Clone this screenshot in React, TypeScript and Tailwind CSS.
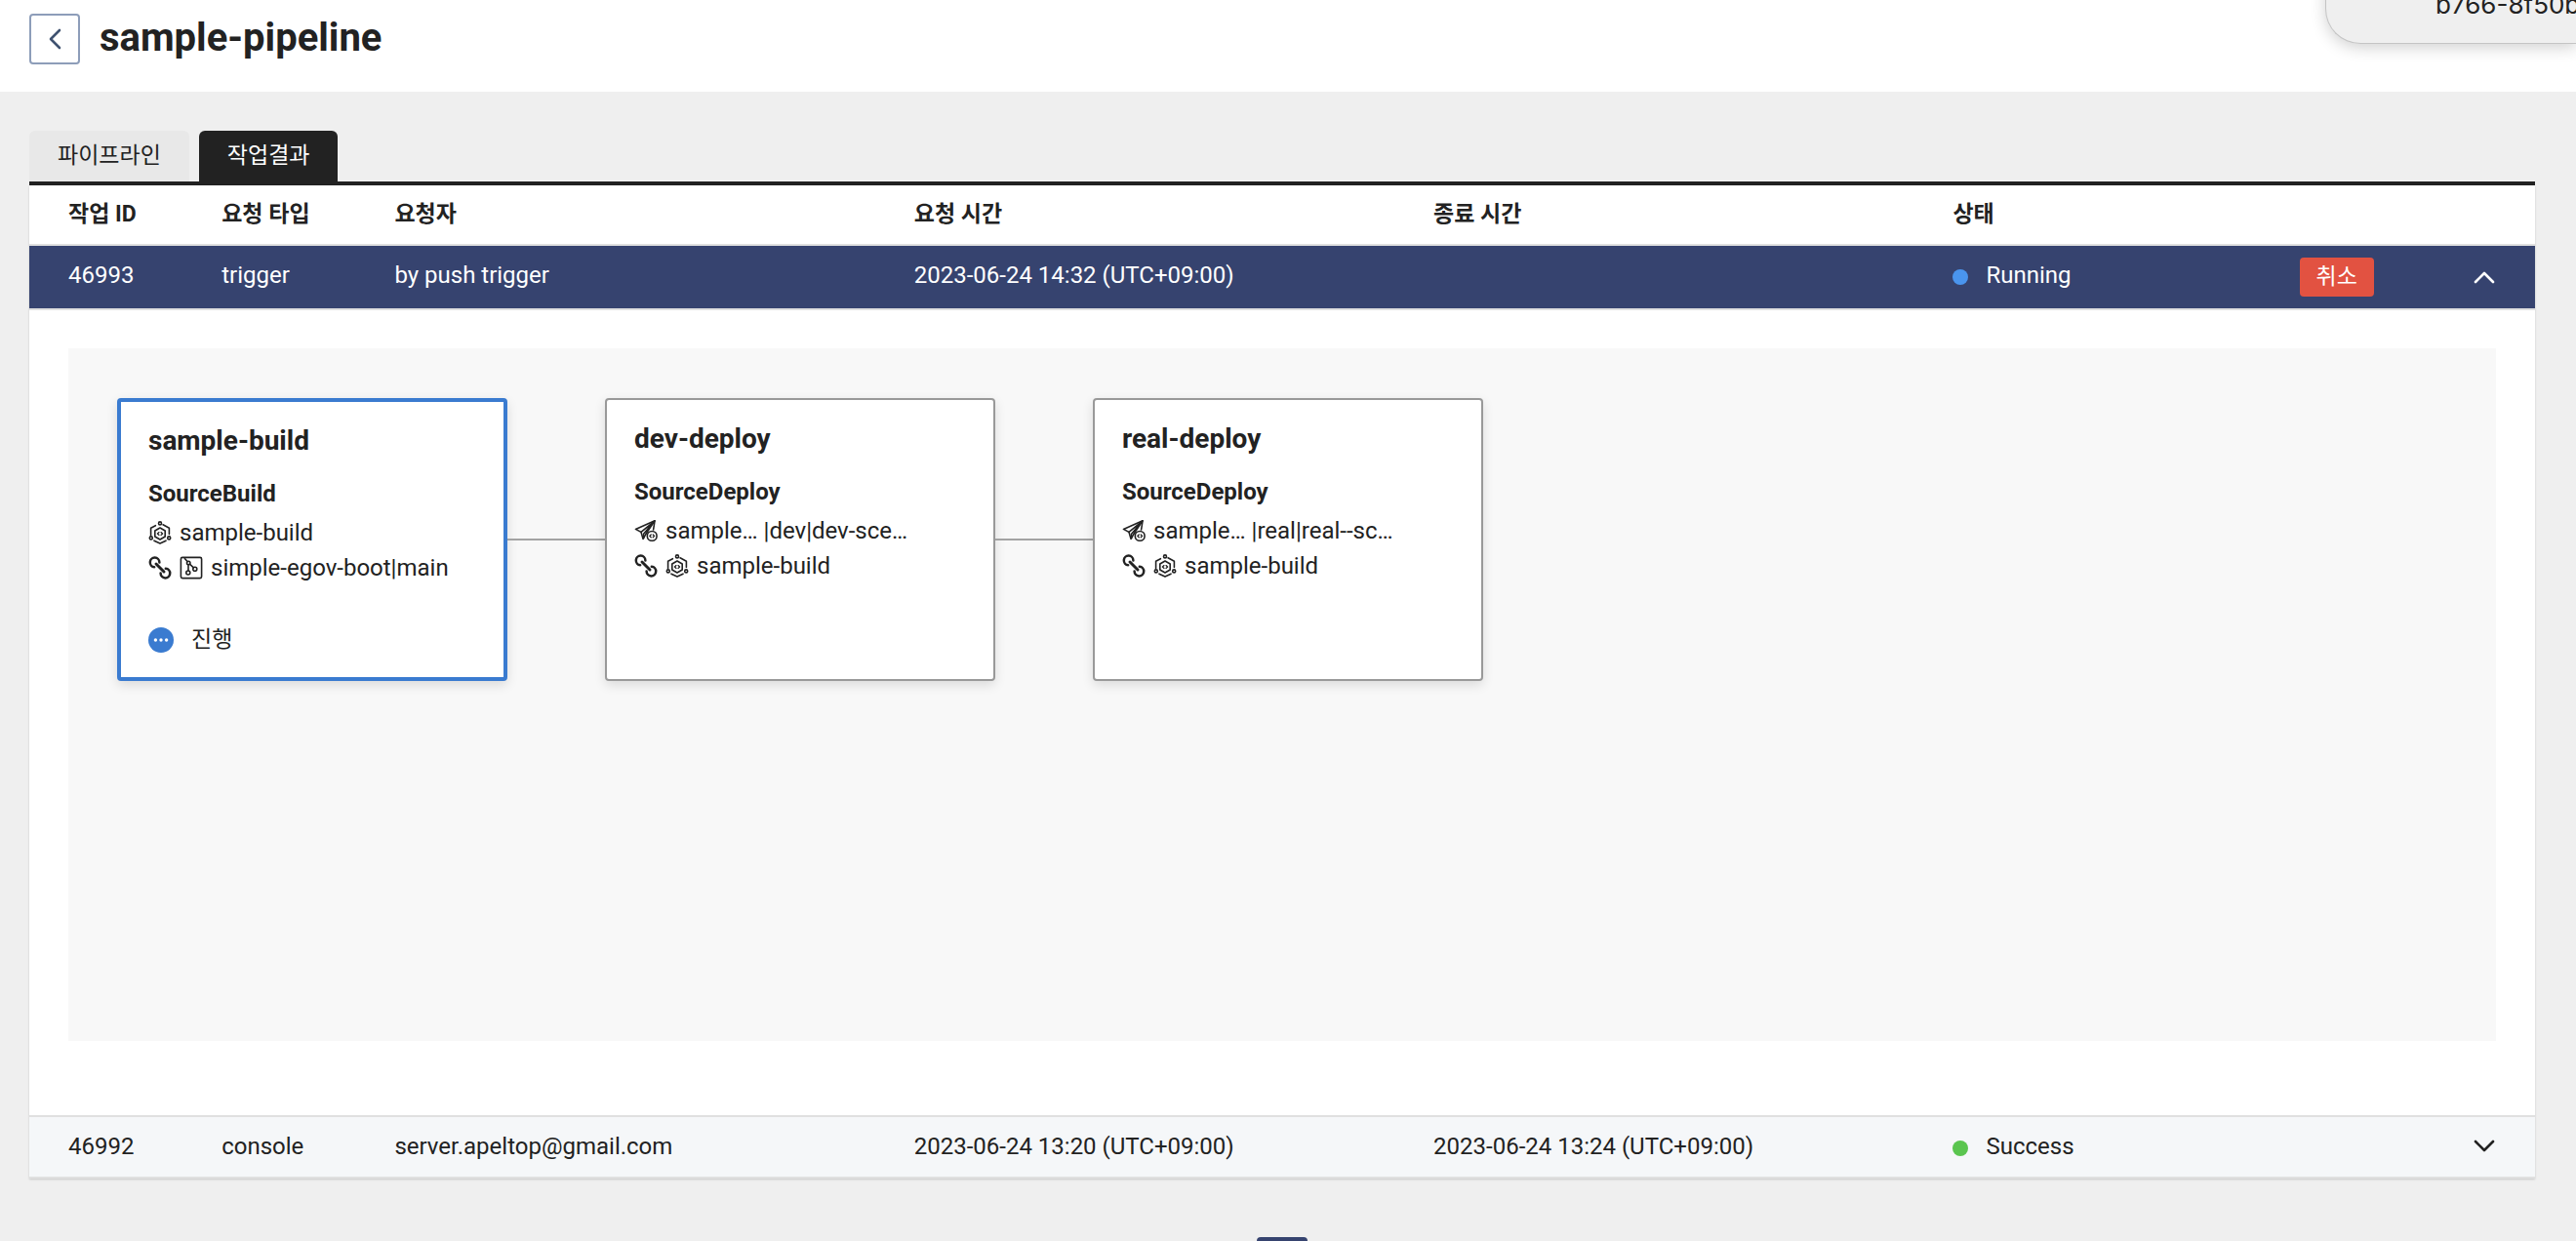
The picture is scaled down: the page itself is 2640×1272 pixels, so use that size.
import { Fragment, useState, type ReactNode } from "react";

type Job = {
  id: string;
  type: string;
  requester: string;
  requestedAt: string;
  finishedAt: string;
  status: "Running" | "Success";
};

const jobs: Job[] = [
  {
    id: "46993",
    type: "trigger",
    requester: "by push trigger",
    requestedAt: "2023-06-24 14:32 (UTC+09:00)",
    finishedAt: "",
    status: "Running",
  },
  {
    id: "46992",
    type: "console",
    requester: "server.apeltop@gmail.com",
    requestedAt: "2023-06-24 13:20 (UTC+09:00)",
    finishedAt: "2023-06-24 13:24 (UTC+09:00)",
    status: "Success",
  },
];

function Icon({ children }: { children: ReactNode }) {
  return (
    <svg
      viewBox="0 0 24 24"
      className="size-6 shrink-0"
      fill="none"
      stroke="currentColor"
      strokeLinecap="round"
      strokeLinejoin="round"
      aria-hidden="true"
    >
      {children}
    </svg>
  );
}

function BuildIcon() {
  return (
    <Icon>
      <g strokeWidth="1.6">
        <circle cx="12" cy="2.4" r="1.5" />
        <circle cx="2.8" cy="17.4" r="1.5" />
        <circle cx="21.2" cy="17.4" r="1.5" />
        <path d="M7.4 4.7 2.6 7.2v7.4" />
        <path d="M15 3.8 21.4 7.2v6.2" />
        <path d="M6 20.2 12 23l6-2.8" />
        <path d="M12 7l5.2 3v6L12 19l-5.2-3v-6z" />
      </g>
      <path strokeWidth="1.3" d="M11 11.6 9.4 13l1.6 1.4M13 11.6l1.6 1.4-1.6 1.4" />
    </Icon>
  );
}

function LinkIcon() {
  return (
    <Icon>
      <g strokeWidth="2.5" strokeLinecap="round">
        <path d="M6.2 11.2A4.8 4.8 0 1 1 11.4 6.4" />
        <path d="M17.8 12.8A4.8 4.8 0 1 1 12.6 17.6" />
        <path d="M8 8l8 8" strokeWidth="3" />
      </g>
    </Icon>
  );
}

function RepositoryIcon() {
  return (
    <Icon>
      <g strokeWidth="1.6">
        <rect x="1.4" y="1.4" width="21.2" height="21.2" rx="1.6" />
        <circle cx="9.2" cy="7" r="1.7" />
        <circle cx="15.8" cy="13.2" r="2" />
        <circle cx="8.8" cy="17" r="2" />
        <path d="M5.4 2.4 8 5.6M10.4 8.2l4 3.6M9 8.8V15" />
      </g>
    </Icon>
  );
}

function DeployIcon() {
  return (
    <Icon>
      <g strokeWidth="1.6">
        <path d="M12.4 14.6 9 20.4 7 13.4 1.4 10.4 21 1.8 19.6 11" />
        <path d="M7 13.4 21 1.8 9.6 15.2v4.6M21 1.8l-8.6 12.8" />
        <circle cx="18.2" cy="17.4" r="4.9" />
      </g>
      <path strokeWidth="1.3" d="M17.2 16 15.8 17.4l1.4 1.4M19.2 16l1.4 1.4-1.4 1.4" />
    </Icon>
  );
}

function Chevron({ className }: { className: string }) {
  return (
    <svg viewBox="0 0 24 24" className={className} fill="none" stroke="currentColor" aria-hidden="true">
      <path d="M3 17l9-9 9 9" strokeWidth="2.6" strokeLinecap="round" strokeLinejoin="round" />
    </svg>
  );
}

function StageCard({
  name,
  kind,
  active = false,
  children,
}: {
  name: string;
  kind: string;
  active?: boolean;
  children: ReactNode;
}) {
  return (
    <article
      className={`h-[290px] w-[400px] shrink-0 rounded bg-white px-7 pt-[22px] shadow-[0_4px_12px_rgba(0,0,0,0.12)] ${
        active ? "border-4 border-[#3a7bd0]" : "border-2 border-[#999999]"
      }`}
    >
      <h2 className="text-[28px] leading-9 font-bold">{name}</h2>
      <h3 className="mt-[18px] leading-9 font-bold">{kind}</h3>
      <div className="mt-1 leading-9">{children}</div>
    </article>
  );
}

function Line({ children }: { children: ReactNode }) {
  return <p className="flex items-center gap-2 whitespace-nowrap">{children}</p>;
}

function Connector() {
  return <div className="h-0.5 w-[100px] shrink-0 bg-[#a3a3a3]" />;
}

function PipelineCanvas() {
  return (
    <div className="flex min-h-[710px] items-start bg-[#f8f8f8] px-[50px] pt-[51px]">
      <div className="flex items-center">
        <StageCard name="sample-build" kind="SourceBuild" active>
          <Line>
            <BuildIcon />
            sample-build
          </Line>
          <Line>
            <LinkIcon />
            <RepositoryIcon />
            simple-egov-boot|main
          </Line>
          <p className="mt-[38px] flex items-center gap-[18px] text-[23px]">
            <svg viewBox="0 0 26 26" className="size-[26px]" aria-hidden="true">
              <circle cx="13" cy="13" r="13" fill="#3a7bd0" />
              <circle cx="7.4" cy="13" r="1.7" fill="#fff" />
              <circle cx="13" cy="13" r="1.7" fill="#fff" />
              <circle cx="18.6" cy="13" r="1.7" fill="#fff" />
            </svg>
            진행
          </p>
        </StageCard>
        <Connector />
        <StageCard name="dev-deploy" kind="SourceDeploy">
          <Line>
            <DeployIcon />
            <span>sample… |dev|dev-sce…</span>
          </Line>
          <Line>
            <LinkIcon />
            <BuildIcon />
            sample-build
          </Line>
        </StageCard>
        <Connector />
        <StageCard name="real-deploy" kind="SourceDeploy">
          <Line>
            <DeployIcon />
            <span>sample… |real|real--sc…</span>
          </Line>
          <Line>
            <LinkIcon />
            <BuildIcon />
            sample-build
          </Line>
        </StageCard>
      </div>
    </div>
  );
}

export default function App() {
  const [openId, setOpenId] = useState("46993");

  return (
    <div className="relative flex h-screen flex-col overflow-hidden bg-[#efefef] font-['Roboto','Noto_Sans_CJK_KR',sans-serif] text-2xl text-[#222222]">
      <header className="flex h-[94px] shrink-0 items-start gap-5 bg-white px-[30px] pt-3.5">
        <button
          type="button"
          aria-label="뒤로"
          className="flex size-[52px] items-center justify-center rounded border-2 border-[#8d9db9] text-[#3f5270]"
        >
          <Chevron className="size-6 -rotate-90" />
        </button>
        <h1 className="text-[40px] leading-[50px] font-bold">sample-pipeline</h1>
      </header>

      <aside className="absolute -top-16 right-0 h-[109px] w-[257px] rounded-bl-[36px] border-b border-l border-[#c4c4c4] bg-[#efefef] pt-[51px] pl-28 font-['Inter',sans-serif] text-[26px] leading-9 whitespace-nowrap shadow-[0_4px_16px_rgba(0,0,0,0.18)]">
        b766-8f50b
      </aside>

      <main className="flex flex-col pt-10 pr-[42px] pl-[30px]">
        <div role="tablist" className="flex gap-2.5 border-b-4 border-[#222222] text-[23px]">
          <button
            type="button"
            role="tab"
            aria-selected="false"
            className="h-[52px] rounded-t-md bg-[#e8e8e8] px-[29px]"
          >
            파이프라인
          </button>
          <button
            type="button"
            role="tab"
            aria-selected="true"
            className="h-[52px] rounded-t-md bg-[#222222] px-[29px] text-white"
          >
            작업결과
          </button>
        </div>

        <table className="w-full table-fixed border-separate border-spacing-0 bg-white text-left shadow-[0_1px_2px_rgba(0,0,0,0.16)] [&_td]:border-b-2 [&_td]:border-[#e0e0e0] [&_td]:px-5 [&_th]:border-b-2 [&_th]:border-[#e0e0e0] [&_th]:px-5">
          <colgroup>
            <col className="w-[6.9%]" />
            <col className="w-[6.9%]" />
            <col className="w-[20.73%]" />
            <col className="w-[20.73%]" />
            <col className="w-[20.73%]" />
            <col className="w-[13.83%]" />
            <col className="w-[6.9%]" />
            <col />
          </colgroup>
          <thead>
            <tr className="h-[62px] text-[23px]">
              <th scope="col">
                <span className="pl-5">작업 ID</span>
              </th>
              <th scope="col">요청 타입</th>
              <th scope="col">요청자</th>
              <th scope="col">요청 시간</th>
              <th scope="col">종료 시간</th>
              <th scope="col">상태</th>
              <td />
              <td />
            </tr>
          </thead>
          <tbody>
            {jobs.map((job) => {
              const open = job.id === openId;
              return (
                <Fragment key={job.id}>
                  <tr
                    className={
                      open
                        ? "h-[66px] bg-[#36436f] text-white [&>td]:pb-1 [&>td:nth-child(n+7)]:pb-0"
                        : "h-[63px] bg-[#f5f7f9] [&>td]:pb-0.5"
                    }
                  >
                    <td>
                      <span className="pl-5">{job.id}</span>
                    </td>
                    <td>{job.type}</td>
                    <td>{job.requester}</td>
                    <td>{job.requestedAt}</td>
                    <td>{job.finishedAt}</td>
                    <td>
                      <span className="flex items-center gap-[18px]">
                        <span
                          className={`mt-1 size-4 rounded-full ${
                            job.status === "Running" ? "bg-[#4a95ee]" : "bg-[#5ac54f]"
                          }`}
                        />
                        {job.status}
                      </span>
                    </td>
                    <td>
                      {job.status === "Running" && (
                        <button
                          type="button"
                          className="flex h-10 items-center rounded bg-[#e25241] px-[17px] text-[23px] text-white"
                        >
                          취소
                        </button>
                      )}
                    </td>
                    <td>
                      <button
                        type="button"
                        aria-label={open ? "접기" : "펼치기"}
                        aria-expanded={open}
                        onClick={() => setOpenId(open ? "" : job.id)}
                        className="flex"
                      >
                        <Chevron className={open ? "size-6" : "size-6 rotate-180"} />
                      </button>
                    </td>
                  </tr>
                  {open && (
                    <tr>
                      <td colSpan={8}>
                        <div className="px-5 pt-[39px] pb-[76px]">
                          <PipelineCanvas />
                        </div>
                      </td>
                    </tr>
                  )}
                </Fragment>
              );
            })}
          </tbody>
        </table>

        <nav aria-label="페이지" className="mt-[60px] flex justify-center">
          <button type="button" aria-label="1" className="size-[52px] rounded bg-[#36436f]" />
        </nav>
      </main>
    </div>
  );
}
